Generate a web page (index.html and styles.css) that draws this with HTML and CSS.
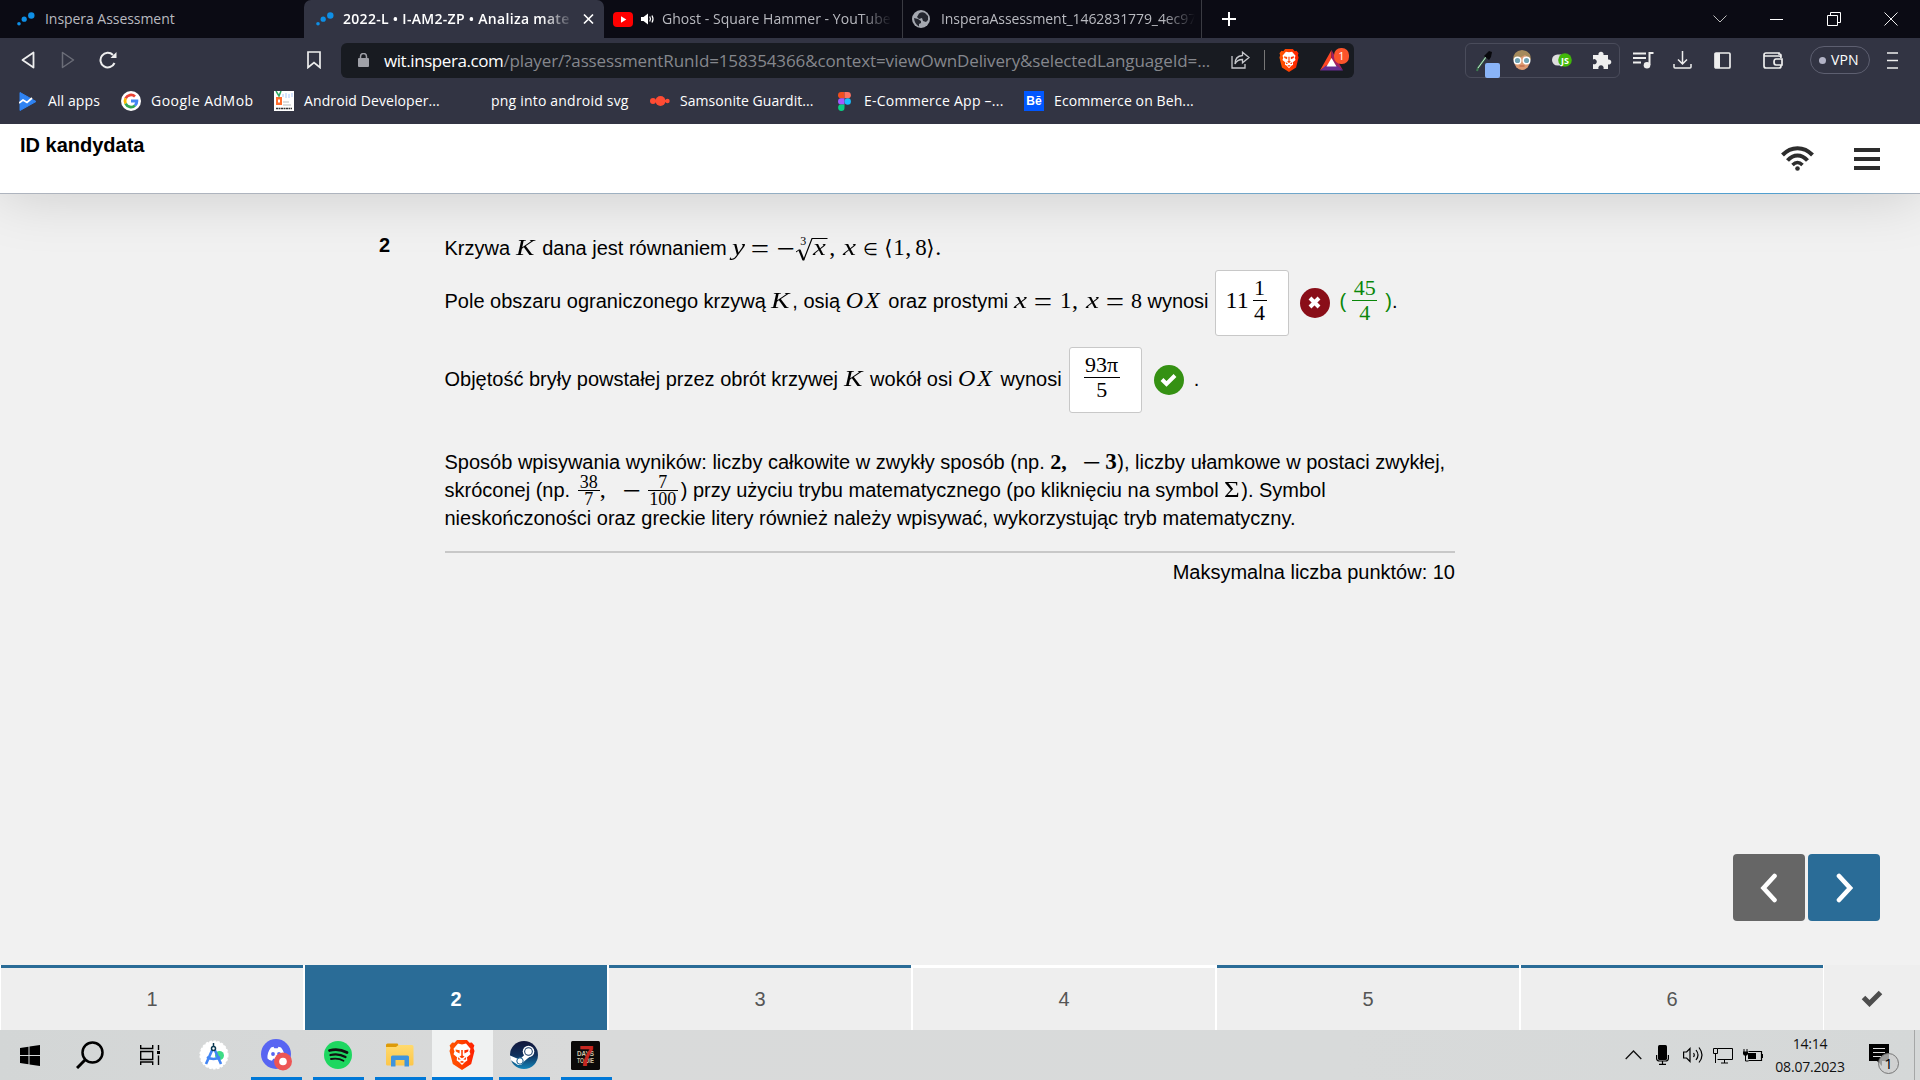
FILE: index.html
```html
<!DOCTYPE html>
<html lang="pl">
<head>
<meta charset="utf-8">
<title>Inspera Assessment</title>
<link rel="stylesheet" href="styles.css">
</head>
<body>
<svg class="defs" width="0" height="0">
  <defs>
    <linearGradient id="lionFill" x1="0" y1="0" x2="1" y2="0"><stop offset="0" stop-color="#ff5601"/><stop offset=".5" stop-color="#ff4000"/><stop offset="1" stop-color="#ff1f01"/></linearGradient>
    <linearGradient id="steamFill" x1="0" y1="0" x2="0" y2="1"><stop offset="0" stop-color="#12163a"/><stop offset=".5" stop-color="#10305c"/><stop offset="1" stop-color="#1285b9"/></linearGradient>
    <linearGradient id="folderFill" x1="0" y1="0" x2="0" y2="1"><stop offset="0" stop-color="#ffda6e"/><stop offset="1" stop-color="#fcc649"/></linearGradient>
    <symbol id="dots" viewBox="0 0 18 14"><g fill="#0e8fe6"><circle cx="14.3" cy="3.5" r="3.2"/><circle cx="7.2" cy="7.2" r="2.6"/><circle cx="2" cy="11.8" r="1.8"/></g></symbol>
    <symbol id="lion" viewBox="0 0 26 30">
      <path d="M8 0h10l2.500 2.800 2.300-.4 2.600 3.200-.9 2.400 1 3-3.300 13L13 30l-9.200-6L.5 11l1-3-.9-2.400L3.200 2.400l2.300.4z" fill="url(#lionFill)"/>
      <path d="M9 3.500l4 .9 4-.9 4.500 5.200-1 2.800 1 2.800-3.500 3 .3 3.200-2.300 1.400L13 25l-3-3.100-2.300-1.400.3-3.200-3.500-3 1-2.800-1-2.800z" fill="#fff"/>
      <path d="M6.500 9.500l4.200.8-.2 3.200-3.600-1.900zM19.500 9.500l-4.200.8.2 3.200 3.600-1.900zM12.200 10h1.600l-.1 5.500 1.900 1.200-2.600 1.600-2.600-1.600 1.900-1.200zM8.800 17l3 2.500-2.500.2zM17.200 17l-3 2.500 2.500.2zM10.800 22l2.200-1.200 2.200 1.200-2.200 1z" fill="url(#lionFill)"/>
    </symbol>
  </defs>
</svg>

<div class="tabstrip">
  <div class="tab tab-first"><svg class="ic-dots"><use href="#dots"/></svg><span class="t-inspera">Inspera Assessment</span></div>
  <div class="tab tab-active"><svg class="ic-dots"><use href="#dots"/></svg><span class="fade t-active">2022-L • I-AM2-ZP • Analiza mate</span>
    <svg width="11" height="12" viewBox="0 0 11 12"><path d="M1 1.500l9 9M10 1.500l-9 9" stroke="#fff" stroke-width="1.700"/></svg></div>
  <div class="tab tab-yt">
    <svg width="20" height="15" viewBox="0 0 20 15"><rect width="20" height="15" rx="4" fill="#f00"/><path d="M8 4.300v6.400l5.300-3.200z" fill="#fff"/></svg>
    <svg class="ic-sound" width="14" height="12" viewBox="0 0 14 12"><path d="M0 4h2.500L7 .5v11L2.500 8H0z" fill="#fff"/><path d="M8.700 3.500q1.500 2.500 0 5M11 2.500q2 3.500 0 7" stroke="#fff" stroke-width="1.200" fill="none"/></svg>
    <span class="fade t-yt">Ghost - Square Hammer - YouTube</span></div>
  <div class="tab tab-pdf">
    <svg width="18" height="18" viewBox="0 0 18 18"><circle cx="9" cy="9" r="9" fill="#a5a8b0"/><path d="M7 3.500q3-2 6-.5l3 3v4l-2 2-3-1-1-3-3 1-2-2zM2 8l4 1 3 2v2l-2 1v2.500Q2.500 14 2 8z" fill="#24262f"/></svg>
    <span class="fade t-pdf">InsperaAssessment_1462831779_4ec97</span></div>
  <svg class="ic-plus" width="14" height="14" viewBox="0 0 14 14"><path d="M7 0v14M0 7h14" stroke="#fff" stroke-width="2"/></svg>
  <div class="winbtns">
    <svg width="14" height="8" viewBox="0 0 14 8"><path d="M.5.500l6.500 6.500L13.500.5" stroke="#bbb" fill="none"/></svg>
    <svg width="14" height="14" viewBox="0 0 14 14"><path d="M0 7.500h13" stroke="#fff"/></svg>
    <svg width="14" height="14" viewBox="0 0 14 14"><path d="M.5 3.500h10v10H.5zM3.500 3V.5h10v10H11" stroke="#fff" fill="none"/></svg>
    <svg width="14" height="14" viewBox="0 0 14 14"><path d="M.5.500l13 13M13.500.5l-13 13" stroke="#eee" fill="none"/></svg>
  </div>
</div>

<div class="toolbar">
  <svg class="ic-back" width="14" height="18" viewBox="0 0 14 18"><path d="M12.500 1.500v15L1.500 9z" fill="none" stroke="#eee" stroke-width="1.800" stroke-linejoin="round"/></svg>
  <svg class="ic-fwd" width="14" height="18" viewBox="0 0 14 18"><path d="M1.500 1.500v15l11-7.500z" fill="none" stroke="#6b6d78" stroke-width="1.500" stroke-linejoin="round"/></svg>
  <svg class="ic-reload" width="18" height="18" viewBox="0 0 18 18"><path d="M15.500 12A7.300 7.300 0 1 1 14 4" fill="none" stroke="#eee" stroke-width="2"/><path d="M17.500 1v6h-6z" fill="#eee"/></svg>
  <svg class="ic-mark" width="14" height="18" viewBox="0 0 14 18"><path d="M1 1h12v15.500l-6-5-6 5z" fill="none" stroke="#eee" stroke-width="1.700"/></svg>
  <div class="urlbar">
    <svg class="ic-lock" width="11" height="14" viewBox="0 0 11 14"><rect y="5" width="11" height="9" rx="1" fill="#9fa1a8"/><path d="M2.500 6V3.500a3 3 0 0 1 6 0V6" stroke="#9fa1a8" stroke-width="1.500" fill="none"/></svg>
    <span class="url"><b>wit.inspera.com</b><span>/player/?assessmentRunId=158354366&amp;context=viewOwnDelivery&amp;selectedLanguageId=...</span></span>
    <svg class="ic-share" width="19" height="18" viewBox="0 0 19 18"><path d="M1 5v12h13v-4M4 13q0-8 7.500-8.500V1.200L18 6.500l-6.500 5.300V8.500Q6 8.500 4 13z" fill="none" stroke="#c6c8cc" stroke-width="1.300"/></svg>
    <i class="vline"></i>
    <svg class="ic-shield" width="20" height="23"><use href="#lion"/></svg>
    <svg class="ic-bat" width="30" height="24" viewBox="0 0 30 24"><path d="M11.500 2L0 22.500l11.500-8z" fill="#ff4724"/><path d="M11.500 2L23 22.500l-11.500-8z" fill="#9e1f63"/><path d="M0 22.500h23l-6-5H6z" fill="#662d91"/><path d="M11.500 10l5 8.500h-10z" fill="#fff"/><rect x="14" y="0" width="15" height="16" rx="7" fill="#fb542b"/><text x="21.300" y="12" text-anchor="middle" class="bat-n">1</text></svg>
  </div>
  <div class="exts">
    <svg width="24" height="28" viewBox="0 0 24 28"><path d="M10 7L2 18l-1 3" stroke="#3d7a50" stroke-width="2"/><path d="M10 7L2 18" stroke="#e8fff0" stroke-width=".8"/><path d="M8 6l5 4 2-3 1-5-3-1-3 3z" fill="#08080c"/><rect x="9" y="13" width="15" height="15" rx="2" fill="#8ab4f8"/></svg>
    <svg width="20" height="20" viewBox="0 0 20 20"><ellipse cx="10" cy="11" rx="8" ry="9" fill="#dc9a72"/><path d="M1 10Q1 1 10 0q9 1 9 10L13 5Q6 9 1 10z" fill="#a58a5b"/><circle cx="5.500" cy="10.500" r="3.300" fill="#6fa3b4" stroke="#fff" stroke-width="1.400"/><circle cx="14.500" cy="10.500" r="3.300" fill="#6fa3b4" stroke="#fff" stroke-width="1.400"/><path d="M7.500 16h5" stroke="#b5563c"/></svg>
    <svg width="20" height="14" viewBox="0 0 20 14"><rect y="1.500" width="14" height="11" rx="5.500" fill="#ddd"/><circle cx="13" cy="7" r="6.800" fill="#41b80a"/><text x="13" y="10.500" text-anchor="middle" class="js">JS</text></svg>
    <svg width="19" height="19" viewBox="0 0 19 19"><path d="M0 4h5.500a2.600 2.600 0 1 1 5 0H15v4.500a2.600 2.600 0 1 1 0 5V18h-4.500a2.700 2.700 0 1 0-5 0H0v-5a2.600 2.600 0 1 0 0-4.600z" fill="#eee"/></svg>
  </div>
  <svg class="ic-music" width="21" height="17" viewBox="0 0 21 17"><path d="M0 1.500h13M0 6h13M0 10.500h8" stroke="#eee" stroke-width="1.800"/><path d="M20.500 1h-4v12" stroke="#eee" stroke-width="2" fill="none"/><circle cx="14" cy="13.200" r="3.300" fill="#eee"/></svg>
  <svg class="ic-down" width="19" height="18" viewBox="0 0 19 18"><path d="M9.500 0v13M5 8.500l4.500 4.500L14 8.500M1 13v3q0 1 1 1h15q1 0 1-1v-3" stroke="#eee" stroke-width="1.500" fill="none"/></svg>
  <svg class="ic-side" width="17" height="17" viewBox="0 0 17 17"><rect x="1" y="1" width="15" height="15" rx="1" stroke="#eee" stroke-width="1.700" fill="none"/><path d="M1 1h5v15H1z" fill="#eee"/></svg>
  <svg class="ic-wallet" width="20" height="17" viewBox="0 0 20 17"><path d="M18 5V3.500Q18 2 16 2V1H3Q1 1 1 3v11q0 2 2 2h13q2 0 2-2v-1M1 4h15q2 0 2 2M19 7h-6q-2 0-2 3t2 3h6z" stroke="#eee" stroke-width="1.700" fill="none"/></svg>
  <div class="vpn"><i></i><span>VPN</span></div>
  <svg class="ic-menu" width="11" height="17" viewBox="0 0 11 17"><path d="M0 1h11M0 8.500h11M0 16h11" stroke="#eee" stroke-width="1.600"/></svg>
</div>

<div class="bookmarks">
  <div class="bm bm1"><svg width="17" height="19" viewBox="0 0 17 19"><path d="M1 .5L17 9.500 1 18.500z" fill="#2f83f3" stroke="#2f83f3" stroke-linejoin="round"/><path d="M0 11l4-3 4 2.500L13 6" stroke="#fff" stroke-width="1.800" fill="none"/></svg><span>All apps</span></div>
  <div class="bm bm2"><svg width="20" height="20" viewBox="0 0 20 20"><circle cx="10" cy="10" r="10" fill="#fff"/><g fill="none" stroke-width="2.800"><path d="M14 5.500A6 6 0 0 0 4.600 7.400" stroke="#ea4335"/><path d="M4.600 7.400a6 6 0 0 0 0 5.200" stroke="#fbbc05"/><path d="M4.600 12.600a6 6 0 0 0 9.400 1.900" stroke="#34a853"/><path d="M14 14.500q2-2 1.900-4.500H10" stroke="#4285f4"/></g></svg><span>Google AdMob</span></div>
  <div class="bm bm3"><svg width="20" height="20" viewBox="0 0 20 20"><path d="M0 0h20v20H0z" fill="#fff"/><path d="M2 6h6v8H2z" fill="#ff6d2d"/><path d="M4 8.500h2v3H4z" fill="#fff"/><path d="M2 0l3 5 2-5" stroke="#2daa62" stroke-width="1.500" fill="none"/><path d="M9 3v3M12 2v5M15 3v4M18 2v4" stroke="#a8c7fa"/><path d="M9 11h6M9 14h8" stroke="#bbb"/><path d="M2 17.500h16" stroke="#333" stroke-width="1.500" stroke-dasharray="2 .5"/></svg><span>Android Developer...</span></div>
  <div class="bm bm4"><span>png into android svg</span></div>
  <div class="bm bm5"><svg width="20" height="12" viewBox="0 0 20 12"><g fill="#ff4b33"><circle cx="10.500" cy="6" r="5"/><circle cx="3" cy="6" r="3"/><circle cx="17.500" cy="6" r="2.200"/><path d="M3 5h14v2H3z"/></g></svg><span>Samsonite Guardit...</span></div>
  <div class="bm bm6"><svg width="13" height="19" viewBox="0 0 13 19"><path d="M6.500 0v6.300H3.200a3.150 3.150 0 0 1 0-6.300z" fill="#f24e1e"/><path d="M6.500 0h3.200a3.150 3.150 0 0 1 0 6.300H6.500z" fill="#ff7262"/><path d="M6.500 6.300v6.300H3.200a3.150 3.150 0 0 1 0-6.300z" fill="#a259ff"/><circle cx="9.700" cy="9.500" r="3.200" fill="#1abcfe"/><path d="M6.500 12.600v3.200a3.200 3.200 0 1 1-3.300-3.200z" fill="#0acf83"/></svg><span>E-Commerce App –...</span></div>
  <div class="bm bm7"><div class="be">Bē</div><span>Ecommerce on Beh...</span></div>
</div>

<div class="page">
  <header class="head">
    <h1>ID kandydata</h1>
    <svg class="ic-wifi" width="33" height="25" viewBox="0 0 33 25"><g fill="none" stroke="#2d2d2d" stroke-width="4"><path d="M1.500 9Q8 2.200 16.500 2.200T31.500 9"/><path d="M6.500 14.500Q11 9.500 16.500 9.500t10 5"/><path d="M11.500 19q5-5 10 0" stroke-width="3.500"/></g><circle cx="16.500" cy="22.500" r="2.300" fill="#2d2d2d"/></svg>
    <svg class="ic-burger" width="26" height="22" viewBox="0 0 26 22"><path d="M0 2h26M0 11h26M0 20h26" stroke="#2d2d2d" stroke-width="4"/></svg>
  </header>

  <main class="question">
    <div class="qnum">2</div>
    <div class="qbody">
      <div class="line l1">Krzywa <span class="m it mK">K</span> dana jest równaniem <span class="m it wide w19">y</span><span class="m op w25">=</span><span class="m op w18">−</span><span class="root"><sup>3</sup><svg width="33" height="26" viewBox="0 0 33 26"><path d="M1 15l3.500-2.500" stroke="#000" stroke-width="1" fill="none"/><path d="M4.500 13l4 10" stroke="#000" stroke-width="2.200" fill="none"/><path d="M8.500 23.500L17 1.500h15.500" stroke="#000" stroke-width="1.200" fill="none"/></svg><em>x</em></span><span class="m w14">,</span><span class="m it wide w20">x</span><span class="m in w22">∈</span><span class="m ang">⟨</span><span class="m w12">1</span><span class="m w10">,</span><span class="m w12">8</span><span class="m ang">⟩</span><span class="m">.</span></div>
      <div class="line l2">Pole obszaru ograniczonego krzywą <span class="m it mK">K</span>, osią <span class="m it mOX">OX</span> oraz prostymi <span class="m it wide w20">x</span><span class="m op w25">=</span><span class="m w12">1</span><span class="m w14">,</span><span class="m it wide w20">x</span><span class="m op w24">=</span><span class="m w11">8</span> wynosi<span class="answer a1"><span class="m num">11</span><span class="frac f1"><span>1</span><span>4</span></span></span><span class="mark bad"><svg width="13" height="13" viewBox="0 0 13 13"><path d="M2 2l9 9M11 2l-9 9" stroke="#fff" stroke-width="4"/></svg></span><span class="fix">(<span class="frac f2"><span>45</span><span>4</span></span>)</span>.</div>
      <div class="line l3">Objętość bryły powstałej przez obrót krzywej <span class="m it mK">K</span> wokół osi <span class="m it mOX">OX</span> wynosi<span class="answer a2"><span class="frac f3"><span>93π</span><span>5</span></span></span><span class="mark good"><svg width="17" height="14" viewBox="0 0 17 14"><path d="M2 6.500l4.500 4.500L15 2.500" stroke="#fff" stroke-width="4" fill="none"/></svg></span><span class="dot">.</span></div>
      <div class="line p1">Sposób wpisywania wyników: liczby całkowite w zwykły sposób (np. <b class="m bn w32">2,</b><span class="m op w22">−</span><b class="m bn w12">3</b>), liczby ułamkowe w postaci zwykłej,</div>
      <div class="line p2">skróconej (np. <span class="frac sm s1"><span>38</span><span>7</span></span><span class="m w20c">,</span><span class="m op w24">−</span><span class="frac sm s2"><span>7</span><span>100</span></span>) przy użyciu trybu matematycznego (po kliknięciu na symbol <span class="m sig">Σ</span>). Symbol</div>
      <div class="line p3">nieskończoności oraz greckie litery również należy wpisywać, wykorzystując tryb matematyczny.</div>
      <div class="max">Maksymalna liczba punktów: 10</div>
    </div>
  </main>

  <div class="arrows">
    <div class="arrow prev"><svg width="18" height="30" viewBox="0 0 18 30"><path d="M14.500 3L3.500 15l11 12" stroke="#fff" stroke-width="4.600" fill="none" stroke-linecap="round"/></svg></div>
    <div class="arrow next"><svg width="18" height="30" viewBox="0 0 18 30"><path d="M4 3l11 12L4 27" stroke="#fff" stroke-width="4.600" fill="none" stroke-linecap="round"/></svg></div>
  </div>

  <nav class="qnav">
    <div class="q">1</div><div class="q current">2</div><div class="q">3</div><div class="q blank">4</div><div class="q">5</div><div class="q">6</div>
    <div class="done"><svg width="22" height="17" viewBox="0 0 22 17"><path d="M2.500 7.500l6 6L19.500 2.500" stroke="#4d4d4d" stroke-width="5" fill="none"/></svg></div>
  </nav>
</div>

<div class="taskbar">
  <div class="tk start"><svg width="20" height="21" viewBox="0 0 20 21"><path d="M0 3l8.500-1.300V10H0zM9.500 1.500L20 0v10H9.500zM0 11h8.500v8.300L0 18zM9.500 11H20v10L9.500 19.500z"/></svg></div>
  <div class="tk search"><svg width="28" height="28" viewBox="0 0 28 28"><circle cx="16.500" cy="11.500" r="10" fill="none" stroke="#000" stroke-width="2.500"/><path d="M9.500 18.500L1 27" stroke="#000" stroke-width="3"/></svg></div>
  <div class="tk tview"><svg width="20" height="20" viewBox="0 0 20 20"><path d="M.7 0v3.500h12V0M.7 6.500h12v8H.7zM.7 20v-3h12v3M18.500 0v5M18.500 10.500V20" stroke="#000" stroke-width="1.400" fill="none"/><path d="M17 6h3v3h-3z"/></svg></div>
  <div class="tk studio"><svg width="30" height="30" viewBox="0 0 30 30"><circle cx="15" cy="15" r="13.800" fill="#fff" stroke="#fff" stroke-width="1.500" stroke-dasharray="2.500 1.500"/><circle cx="20.500" cy="15.500" r="4.500" fill="#3ddc84"/><path d="M14.500 7L7 24M14.500 7L22 24M8 17q6.500 4 13 0" stroke="#4285f4" stroke-width="2.600" fill="none"/><circle cx="14.500" cy="8.500" r="2" fill="#fff" stroke="#0b3a53" stroke-width="1.500"/><path d="M14.500 3v4" stroke="#0b3a53" stroke-width="1.500"/></svg></div>
  <div class="tk run discord"><svg width="32" height="32" viewBox="0 0 32 32"><circle cx="15" cy="15" r="15" fill="#5865f2"/><path d="M10 8.500l2.500-.7.800 1.400h3.400l.8-1.400 2.500.7q4 5 3.500 11-2 2-4.500 2.300l-1.200-2h-5.600l-1.200 2Q8 21.500 6.500 19.500q-.5-6 3.500-11z" fill="#fff"/><circle cx="12" cy="15" r="1.900" fill="#5865f2"/><circle cx="18" cy="15" r="1.900" fill="#5865f2"/><circle cx="22" cy="22.500" r="9" fill="#ed5555"/><circle cx="22" cy="22.500" r="3.800" fill="#fff"/></svg></div>
  <div class="tk run spotify"><svg width="28" height="28" viewBox="0 0 28 28"><circle cx="14" cy="14" r="14" fill="#1ed760"/><g fill="none" stroke="#111" stroke-linecap="round"><path d="M5.500 9.500q9-2.500 17.500 2" stroke-width="2.800"/><path d="M6.500 14q8-2 15 2" stroke-width="2.300"/><path d="M7 18q7-1.500 12.500 1.800" stroke-width="1.800"/></g></svg></div>
  <div class="tk run folder"><svg width="28" height="24" viewBox="0 0 28 24"><path d="M0 2q0-1.500 1.500-1.500h10L13 3l-1 3H0z" fill="#dd9a08"/><path d="M0 4h10l2.500-2H26q1.500 0 1.500 1.500V21q0 1.500-1.500 1.500H1.500Q0 22.500 0 21z" fill="url(#folderFill)"/><path d="M5 23.500V14q0-1.500 1.500-1.500h15Q23 12.500 23 14v9.500h-4.500V17h-9v6.500z" fill="#3f94dd"/></svg></div>
  <div class="tk run brave"><svg width="26" height="30"><use href="#lion"/></svg></div>
  <div class="tk run steam"><svg width="29" height="28" viewBox="0 0 29 28"><circle cx="15" cy="14" r="14" fill="url(#steamFill)"/><path d="M1 14.500l9.500 4 7-6.500 4 3-6.500 5.500-3 3.500H9L1.500 19z" fill="#fff"/><circle cx="19.500" cy="10.500" r="5.800" fill="#fff"/><circle cx="19.500" cy="10.500" r="4.300" fill="#123664"/><circle cx="19.500" cy="10.500" r="3.300" fill="#fff"/><circle cx="11" cy="20" r="3.200" fill="#fff" stroke="#125b8d"/></svg></div>
  <div class="tk run seven"><svg width="29" height="29" viewBox="0 0 29 29"><rect width="29" height="29" rx="1.500" fill="#0b0908"/><text x="6" y="14.500" textLength="17" lengthAdjust="spacingAndGlyphs" class="sv">DAYS</text><text x="6" y="22" textLength="17" lengthAdjust="spacingAndGlyphs" class="sv">TO DIE</text><text x="8" y="25" textLength="15" lengthAdjust="spacingAndGlyphs" class="sv7">7</text></svg></div>
  <div class="tray">
    <svg class="y1" width="17" height="10" viewBox="0 0 17 10"><path d="M.7 9L8.500 1l7.800 8" stroke="#111" stroke-width="1.300" fill="none"/></svg>
    <svg class="y2" width="13" height="20" viewBox="0 0 13 20"><rect x="2" width="9" height="15" rx="1.500"/><path d="M.6 10v3.500q0 2.500 3 2.500h5.800q3 0 3-2.500V10M6.500 16v3.300M3 19.300h7" stroke="#000" stroke-width="1.200" fill="none"/></svg>
    <svg class="y3" width="20" height="18" viewBox="0 0 20 18"><path d="M.6 6h3L7 2.500v13L3.600 12h-3zM10.500 7q1.500 2 0 4M13 4q4 5 0 10M16 1.500q6 7.500 0 15" stroke="#000" stroke-width="1.200" fill="none"/></svg>
    <svg class="y4" width="20" height="17" viewBox="0 0 20 17"><path d="M4.500 1.500h15v11h-15M.5 1.500h4v5h-4zM2.500 7v9M11.500 13v3M8 16h7" stroke="#000" fill="none"/></svg>
    <svg class="y5" width="20" height="14" viewBox="0 0 20 14"><path d="M5.500 3.500h13v9h-13" stroke="#000" stroke-width="1.200" fill="none"/><path d="M5 5h8v6H5zM19 6h1v4h-1zM0 3.500h5V6L4 7.500H1L0 6z"/><path d="M1 1v3M4 1v3M2.500 7v6h3" stroke="#000" fill="none"/></svg>
    <div class="clock"><span class="time">14:14</span><span class="date">08.07.2023</span></div>
    <div class="notif"><svg width="20" height="22" viewBox="0 0 20 22"><path d="M0 0h20v17h-7v5l-5-5H0z"/><path d="M4 4.500h12M4 8.500h12M4 12.500h8" stroke="#ddd"/></svg><i>1</i></div>
    <div class="peek"></div>
  </div>
</div>
</body>
</html>
```

FILE: styles.css
```css
* { box-sizing: border-box; }
body { margin: 0; width: 1920px; height: 1080px; overflow: hidden; display: flex; flex-direction: column; font-family: "Open Sans", "Noto Sans", sans-serif; background: #f1f1f1; }
svg { display: block; flex: none; }
.defs { position: absolute; }

/* browser tabs */
.tabstrip { height: 38px; flex: none; background: #0b0b14; display: flex; align-items: center; font-size: 14px; color: #b9bac0; }
.tab { height: 38px; display: flex; align-items: center; white-space: nowrap; flex: none; }
.tab span { line-height: 38px; }
.tab-first { width: 304px; padding-left: 17px; gap: 10px; }
.tab-active { width: 300px; padding-left: 12px; gap: 9px; background: #323443; border-radius: 7px 7px 0 0; color: #fff; font-weight: 600; }
.ic-dots { width: 18px; height: 14px; }
.fade { overflow: hidden; -webkit-mask-image: linear-gradient(to right, #000 calc(100% - 32px), transparent); mask-image: linear-gradient(to right, #000 calc(100% - 32px), transparent); }
.t-inspera { letter-spacing: -.05px; }
.t-active { width: 231px; letter-spacing: .3px; }
.tab-yt { width: 299px; padding-left: 9px; border-right: 1px solid #3a3b42; }
.ic-sound { margin: 0 7px 0 8px; }
.t-yt { width: 230px; letter-spacing: .04px; }
.tab-pdf { width: 299px; padding-left: 9px; gap: 11px; border-right: 1px solid #3a3b42; }
.t-pdf { width: 254px; letter-spacing: -.08px; }
.ic-plus { margin-left: 20px; }
.winbtns { margin-left: auto; margin-right: 22px; display: flex; align-items: center; gap: 43px; }

/* address row */
.toolbar { height: 44px; flex: none; background: #323443; display: flex; align-items: center; }
.ic-back { margin-left: 21px; }
.ic-fwd { margin-left: 26px; }
.ic-reload { margin-left: 24px; }
.ic-mark { margin-left: 190px; }
.urlbar { margin-left: 20px; width: 1013px; height: 35px; border-radius: 6px; background: #181b21; display: flex; align-items: center; }
.ic-lock { margin-left: 17px; }
.url { margin-left: 15px; width: 828px; font-size: 17px; color: #85878d; white-space: nowrap; }
.url b { font-weight: 400; color: #fff; letter-spacing: -.42px; }
.url span { letter-spacing: -.12px; }
.ic-share { margin-left: 19px; }
.vline { width: 1px; height: 20px; background: #777; margin-left: 14px; }
.ic-shield { margin-left: 14px; }
.ic-bat { margin-left: 21px; }
.bat-n { font: 11px "Open Sans", sans-serif; fill: #fff; }
.js { font: bold 9px "Open Sans", sans-serif; fill: #fff; }
.exts { margin-left: 111px; width: 155px; height: 35px; border: 1px solid #4a4c5b; border-radius: 6px; display: flex; align-items: center; padding-left: 10px; }
.exts svg:nth-child(1) { margin-top: 7px; }
.exts svg:nth-child(2) { margin-left: 12px; }
.exts svg:nth-child(3) { margin-left: 20px; }
.exts svg:nth-child(4) { margin-left: 21px; }
.ic-music { margin-left: 13px; }
.ic-down { margin-left: 19px; }
.ic-side { margin-left: 22px; }
.ic-wallet { margin-left: 32px; }
.vpn { margin-left: 27px; width: 60px; height: 28px; border: 1px solid #5d5f70; border-radius: 14px; display: flex; align-items: center; gap: 5px; padding-left: 8px; color: #fff; font-size: 14px; letter-spacing: .1px; }
.vpn span { margin-top: -1px; }
.vpn i { width: 7px; height: 7px; border-radius: 50%; background: #b2b3c6; }
.ic-menu { margin-left: 17px; }

/* bookmarks */
.bookmarks { height: 42px; flex: none; background: #323443; display: flex; padding-left: 19px; color: #fff; font-size: 14px; letter-spacing: .1px; }
.bm { height: 38px; display: flex; align-items: center; white-space: nowrap; flex: none; }
.bm span { margin-left: 10px; margin-top: -2px; }
.bm1 { width: 102px; }
.bm1 span { margin-left: 12px; }
.bm2 { width: 153px; letter-spacing: .5px; }
.bm3 { width: 218px; }
.bm4 { width: 158px; letter-spacing: .2px; }
.bm4 span { margin-left: -1px; }
.bm5 { width: 188px; letter-spacing: .05px; }
.bm6 { width: 186px; letter-spacing: .25px; }
.bm6 span { margin-left: 13px; }
.bm7 { letter-spacing: .1px; }
.be { width: 20px; height: 20px; background: #0057ff; font: bold 12px/21px "Liberation Sans", sans-serif; text-align: center; }

/* assessment page */
.page { height: 906px; flex: none; display: flex; flex-direction: column; font-family: "Liberation Sans", Arial, sans-serif; font-size: 20px; color: #000; background: #f1f1f1; }
.head { height: 70px; flex: none; background: #fff; border-bottom: 1px solid; border-image: linear-gradient(to right, #aeb4be 20%, #4f9fd0 92%, #aeb4be) 1; box-shadow: 0 0 60px rgba(0, 0, 0, .17); display: flex; padding-left: 20px; clip-path: inset(0 0 -80px 0); }
.head h1 { margin: 9px 0 0; font-size: 20px; line-height: 25px; }
.ic-wifi { margin: 22px 40px 0 auto; }
.ic-burger { margin: 24px 40px 0 0; }

.question { flex: 1; display: flex; padding-left: 379px; }
.qnum { width: 65.500px; font-weight: bold; line-height: 28px; padding-top: 37px; }
.qbody { width: 1010.500px; }
.line { white-space: pre; line-height: 28px; height: 28px; }
.l1 { margin-top: 40px; }
.l2 { margin-top: 25px; }
.l3 { margin-top: 50px; }
.p1 { margin-top: 55px; }
.m { display: inline-block; font-family: "Liberation Serif", "Times New Roman", serif; font-size: 24px; line-height: 20px; white-space: nowrap; }
.it { font-style: italic; }
.bn { font-size: 22px; }
.wide { transform-origin: left; transform: scaleX(1.22); }
.mK { width: 21px; transform-origin: left; transform: scaleX(1.15); }
.mOX { width: 37px; letter-spacing: 2px; }
.op { font-size: 28px; transform-origin: left; transform: translate(1px, 3px) scaleX(1.16); text-indent: -1px; }
.w10 { width: 10px; }
.w11 { width: 11px; font-size: 22px; }
.w12 { width: 12px; font-size: 23px; }
.w14 { width: 14px; }
.w18 { width: 18px; }
.w19 { width: 19px; }
.w20 { width: 20px; }
.w20c { width: 23px; }
.w22 { width: 22px; }
.w24 { width: 25px; }
.w25 { width: 26px; }
.w32 { width: 33px; }
.ang { width: 8px; font-family: "DejaVu Sans", sans-serif; font-size: 21px; text-indent: -1px; }
.in { font-family: "DejaVu Sans", sans-serif; font-size: 17px; }
.sig { width: 17px; transform-origin: left; transform: scaleX(1.12); }
.root { display: inline-block; position: relative; width: 34px; height: 20px; line-height: 20px; }
.root svg { position: absolute; left: 0; top: 0; }
.root sup { position: absolute; left: 5px; top: -6px; font: 12px/20px "Liberation Serif", serif; }
.root em { display: inline-block; font: italic 24px/20px "Liberation Serif", serif; margin-left: 18px; transform-origin: left; transform: scaleX(1.2); }
.answer { display: inline-flex; align-items: center; vertical-align: middle; height: 66px; background: #fff; border: 1px solid #c8c8c8; border-radius: 3px; margin-top: -20px; margin-bottom: -20px; }
.a1 { width: 74px; margin-left: 6px; padding-left: 10px; }
.a2 { width: 73px; margin: -21px 0 -19px 7px; padding-left: 14px; }
.num { width: 27px; margin-top: -6px; }
.frac { display: inline-flex; flex-direction: column; align-items: center; vertical-align: middle; font-family: "Liberation Serif", serif; font-size: 22px; line-height: 24px; margin: -22px 0 -18px; }
.frac span { width: 100%; text-align: center; }
.frac span:first-child { margin-top: -1px; }
.frac span + span { border-top: 1px solid currentColor; line-height: 23px; }
.f1 { width: 14px; }
.answer .frac { margin: -23px 0 -19px; }
.f2 { width: 25px; margin-left: 6px; margin-right: 8px; }
.f3 { width: 36px; }
.sm { font-size: 18px; line-height: 15px; margin: -20px 0; }
.sm span + span { line-height: 16px; }
.s1 { width: 22px; margin-left: 2px; }
.s2 { width: 30px; margin-right: 3px; }
.fix { color: #0a870a; margin-left: 10px; }
.mark { display: inline-flex; width: 30px; height: 30px; border-radius: 50%; align-items: center; justify-content: center; vertical-align: middle; margin-left: 11px; }
.bad { background: #8a0e18; }
.good { background: #359113; margin: -1px 0 1px 12px; }
.dot { margin-left: 10px; }
.max { margin-top: 19px; border-top: 2px solid #c8c8c8; text-align: right; line-height: 28px; padding-top: 5px; }

.arrows { height: 67px; margin: 0 40px 44px auto; display: flex; gap: 3px; flex: none; }
.arrow { width: 72px; border-radius: 4px; display: flex; align-items: center; justify-content: center; }
.prev { background: #666; }
.next { background: #2a6c97; }

.qnav { height: 65px; flex: none; display: flex; padding-left: 1px; gap: 2px; background: linear-gradient(#fff, #fff) left / 1824px 100% no-repeat; }
.q { width: 302px; background: #eee; border-top: 3px solid #2a6c97; color: #555; text-align: center; line-height: 62px; flex: none; }
.current { background: #2a6c97; color: #fff; font-weight: bold; }
.blank { border-top-color: #fff; }
.done { flex: 1; margin-left: -1px; background: #eee; display: flex; align-items: center; padding-left: 37px; padding-top: 2px; }

/* taskbar */
.taskbar { height: 50px; flex: none; background: linear-gradient(to right, #d3d6d6, #d9dada 30%, #d8dada 70%, #d5d8d8); display: flex; }
.tk { width: 62px; height: 50px; flex: none; display: flex; align-items: center; justify-content: center; border-bottom: 0 solid #0078d7; }
.tk.run { border-bottom-width: 3px; width: 51px; margin-right: 11px; padding-top: 3px; padding-right: 2px; }
.start { width: 60px; }
.search { padding-right: 2px; }
.tview { width: 56px; }
.studio { width: 73px; padding-right: 2px; }
.tk.discord { padding-right: 0; }
.tk.folder { margin-right: 6px; }
.tk.brave { width: 61px; margin-right: 6px; background: #f0f2f2; }
.sv { font: bold 8px "Liberation Sans", sans-serif; fill: #cfc4a8; }
.sv7 { font: bold 30px "Liberation Sans", sans-serif; fill: #c62720; }
.tray { margin-left: auto; display: flex; align-items: center; height: 50px; }
.y2 { margin-left: 14px; }
.y3 { margin-left: 14px; }
.y4 { margin-left: 10px; }
.y5 { margin-left: 10px; }
.clock { margin-left: 12px; width: 70px; display: flex; flex-direction: column; align-items: center; font-size: 14px; line-height: 23px; color: #111; letter-spacing: -.2px; white-space: nowrap; }
.notif { margin-left: 24px; width: 45px; position: relative; }
.notif i { position: absolute; left: 9px; top: 9px; width: 21px; height: 21px; border-radius: 50%; border: 1px solid #777; background: rgba(205, 207, 207, .75); font: 15px/19px "Open Sans", sans-serif; text-align: center; color: #000; }
.peek { width: 6px; height: 50px; border-left: 1px solid #a5a7a7; }
```
